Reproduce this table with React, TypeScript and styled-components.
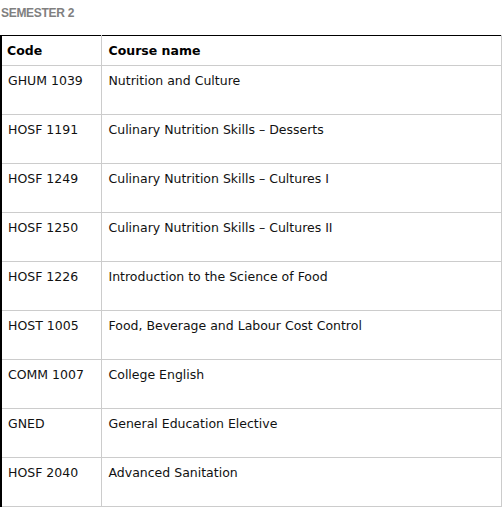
import React from "react";
import styled, { createGlobalStyle } from "styled-components";

const Global = createGlobalStyle`
  html, body { margin: 0; padding: 0; background: #fff; }
  body { font-family: "DejaVu Sans", Verdana, sans-serif; }
`;

const Page = styled.div`
  width: 503px;
  padding-top: 6px;
`;

const Title = styled.h3`
  margin: 0 0 0 1px;
  font-family: "Liberation Sans", Arial, sans-serif;
  font-size: 12px;
  font-weight: bold;
  color: #808080;
  letter-spacing: -0.3px;
  line-height: 14px;
  height: 29px;
`;

const Table = styled.table`
  border-collapse: collapse;
  width: 502px;
  border: 1px solid #000;
  border-left-width: 2px;
  table-layout: fixed;
`;

const HeadCell = styled.th<{ $name?: boolean }>`
  text-align: left;
  font-weight: bold;
  font-size: 12.5px;
  color: #000;
  height: 30px;
  padding: 0 0 0 ${(p) => (p.$name ? 7 : 5)}px;
  border: 1px solid #ccc;
  border-top-color: #000;
  vertical-align: middle;
  box-sizing: border-box;
`;

const Cell = styled.td<{ $name?: boolean }>`
  font-size: 12.5px;
  color: #111;
  height: 49px;
  padding: 7px 0 0 ${(p) => (p.$name ? 7 : 6)}px;
  border: 1px solid #ccc;
  vertical-align: top;
  box-sizing: border-box;
  line-height: 16px;
`;

const rows: [string, string][] = [
  ["GHUM 1039", "Nutrition and Culture"],
  ["HOSF 1191", "Culinary Nutrition Skills \u2013 Desserts"],
  ["HOSF 1249", "Culinary Nutrition Skills \u2013 Cultures I"],
  ["HOSF 1250", "Culinary Nutrition Skills \u2013 Cultures II"],
  ["HOSF 1226", "Introduction to the Science of Food"],
  ["HOST 1005", "Food, Beverage and Labour Cost Control"],
  ["COMM 1007", "College English"],
  ["GNED", "General Education Elective"],
  ["HOSF 2040", "Advanced Sanitation"],
];

export default function App() {
  return (
    <Page>
      <Global />
      <Title>SEMESTER 2</Title>
      <Table>
        <colgroup>
          <col style={{ width: 100 }} />
          <col />
        </colgroup>
        <thead>
          <tr>
            <HeadCell>Code</HeadCell>
            <HeadCell $name>Course name</HeadCell>
          </tr>
        </thead>
        <tbody>
          {rows.map(([code, name]) => (
            <tr key={code}>
              <Cell>{code}</Cell>
              <Cell $name>{name}</Cell>
            </tr>
          ))}
        </tbody>
      </Table>
    </Page>
  );
}
